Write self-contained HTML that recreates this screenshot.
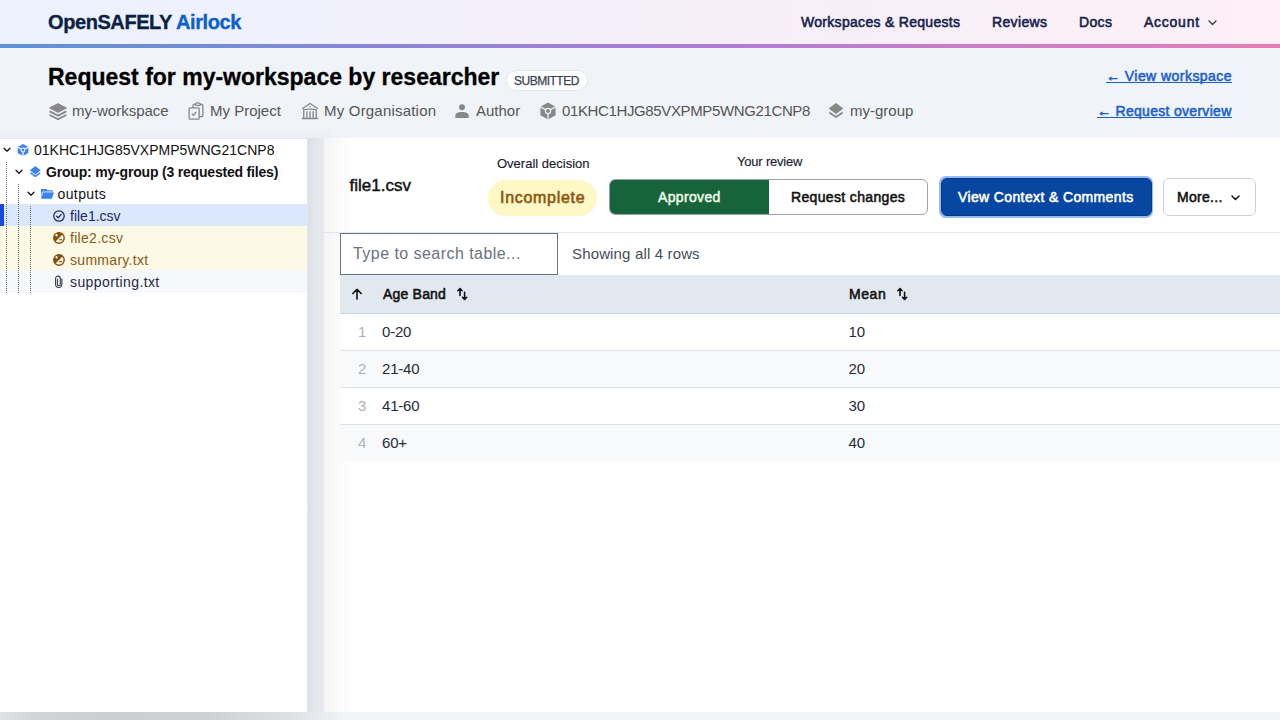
<!DOCTYPE html>
<html><head><meta charset="utf-8">
<style>
*{box-sizing:border-box;margin:0;padding:0}
html,body{width:1280px;height:720px;overflow:hidden}
body{font-family:"Liberation Sans",sans-serif;background:#f0f3f8;color:#111;position:relative}
.a{position:absolute;white-space:nowrap;line-height:1}
svg{position:absolute;display:block;overflow:visible}
#hdr{position:absolute;left:0;top:0;width:1280px;height:44px;background:linear-gradient(90deg,#ecf2fe 0%,#f5effa 50%,#fdf0f6 100%)}
#hbar{position:absolute;left:0;top:44px;width:1280px;height:4px;background:linear-gradient(90deg,#5b93d8 0%,#a97bdb 50%,#e97db8 100%)}
.logo{font-size:20px;font-weight:bold;color:#0a1f44;letter-spacing:-0.42px;-webkit-text-stroke:0.35px #0a1f44}
.logo span{-webkit-text-stroke:0.35px #0b5fcc}
.logo span{color:#0b5fcc}
.nav{font-size:14px;color:#12224a;-webkit-text-stroke:0.55px #12224a;letter-spacing:0.35px}
#nav1{letter-spacing:0.3px}
#nav4{letter-spacing:0.75px}
.title{font-size:23px;font-weight:bold;color:#000;-webkit-text-stroke:0.3px #000}
.pill{left:506px;top:70px;width:82px;height:21px;border-radius:11px;background:#fff;border:1px solid #e3e7ee}
.pilltxt{font-size:12px;color:#3a4152;letter-spacing:-0.5px;-webkit-text-stroke:0.25px #3a4152}
.meta{font-size:15px;color:#555}
#m5{letter-spacing:-0.37px}
#m3{letter-spacing:0.2px}
.rlink{font-size:14px;color:#1b5fcc;-webkit-text-stroke:0.55px #1b5fcc;letter-spacing:0.45px}
.ul{position:absolute;height:2px;background:#1b5fcc}
#tree{position:absolute;left:0;top:138px;width:308px;height:574px;background:#fff;border-top:1px solid #e3e6eb;border-right:1px solid #e3e6eb}
#main{position:absolute;left:324px;top:138px;width:956px;height:574px;background:linear-gradient(90deg,#f5f5f6 0px,#fafafa 14px,#fff 30px)}
.tt{font-size:14px;color:#111}
.row{position:absolute;left:0;width:307px;height:22px}
.dot{position:absolute;width:1px;background:repeating-linear-gradient(180deg,transparent 0 1px,#6a6a6a 1px 2px)}
</style></head><body>
<div id="hdr"></div><div id="hbar"></div>
<div id="logo" class="a logo" style="left:48px;top:12px">OpenSAFELY <span>Airlock</span></div>
<div id="nav1" class="a nav" style="left:801px;top:15px">Workspaces &amp; Requests</div>
<div id="nav2" class="a nav" style="left:992px;top:15px">Reviews</div>
<div id="nav3" class="a nav" style="left:1079px;top:15px">Docs</div>
<div id="nav4" class="a nav" style="left:1144px;top:15px">Account</div>
<svg style="left:1207.5px;top:20.2px" width="9" height="6" viewBox="0 0 9 6"><path d="M1 1l3.5 3.5L8 1" fill="none" stroke="#333a48" stroke-width="1.3" stroke-linecap="round" stroke-linejoin="round"/></svg>

<div id="title" class="a title" style="left:48px;top:65.5px">Request for my-workspace by researcher</div>
<div class="a pill"></div>
<div id="pilltxt" class="a pilltxt" style="left:514px;top:75px">SUBMITTED</div>

<!-- meta row -->
<svg style="left:49px;top:102.5px" width="18" height="17" viewBox="0 0 18 17"><path d="M9 0.8L17.2 5 9 9.2 0.8 5z" fill="#888" stroke="#888" stroke-width="1.2" stroke-linejoin="round"/><path d="M1.2 8.6L9 12.6l7.8-4M1.2 12.2L9 16.2l7.8-4" fill="none" stroke="#888" stroke-width="1.8" stroke-linecap="round" stroke-linejoin="round"/></svg>
<div id="m1" class="a meta" style="left:72px;top:103px">my-workspace</div>
<svg style="left:186px;top:101px" width="20" height="20" viewBox="0 0 24 24"><path fill="none" stroke="#888" stroke-width="1.6" stroke-linecap="round" stroke-linejoin="round" d="M11.35 3.836c-.065.21-.1.433-.1.664 0 .414.336.75.75.75h4.5a.75.75 0 00.75-.75 2.250 2.250 0 00-.1-.664m-5.8 0A2.251 2.251 0 0113.5 2.25H15c1.012 0 1.867.668 2.15 1.586m-5.8 0c-.376.023-.75.05-1.124.08C9.095 4.01 8.25 4.973 8.25 6.108V8.25m8.9-4.414c.376.023.75.05 1.124.08 1.131.094 1.976 1.057 1.976 2.192V16.5A2.25 2.25 0 0118 18.75h-2.25m-7.5-10.5H4.875c-.621 0-1.125.504-1.125 1.125v11.25c0 .621.504 1.125 1.125 1.125h9.75c.621 0 1.125-.504 1.125-1.125V18.75m-7.5-10.5h6.375c.621 0 1.125.504 1.125 1.125v9.375m-8.250-3l1.5 1.5 3-3.75"/></svg>
<div id="m2" class="a meta" style="left:210px;top:103px">My Project</div>
<svg style="left:300px;top:101px" width="20" height="20" viewBox="0 0 24 24"><path fill="none" stroke="#888" stroke-width="1.6" stroke-linecap="round" stroke-linejoin="round" d="M12 21v-8.25M15.75 21v-8.25M8.25 21v-8.25M3 9l9-6 9 6m-1.5 12V10.332A48.36 48.36 0 0012 9.75c-2.551 0-5.056.2-7.5.582V21M3 21h18M12 6.75h.008v.008H12V6.75z"/></svg>
<div id="m3" class="a meta" style="left:324px;top:103px">My Organisation</div>
<svg style="left:455px;top:104px" width="14" height="14" viewBox="0 0 14 14"><circle cx="7" cy="3.3" r="3" fill="#888"/><path d="M0.3 14V11.6C0.3 9.3 2.6 7.9 7 7.9S13.7 9.3 13.7 11.6V14Z" fill="#888"/></svg>
<div id="m4" class="a meta" style="left:476px;top:103px">Author</div>
<svg id="cube1" style="left:538px;top:101px" width="20" height="20" viewBox="0 0 20 20"><defs><mask id="cm1"><rect width="20" height="20" fill="#fff"/><path d="M10 10L2 5.6M10 10L18 5.6M10 10V19" stroke="#000" stroke-width="1.3"/><circle cx="10" cy="10" r="3.2" fill="#000"/><circle cx="10" cy="10" r="2" fill="#fff"/></mask></defs><path fill="#888" mask="url(#cm1)" d="M10 1.6l7.6 4.2v8.4L10 18.4l-7.6-4.2V5.8z"/></svg>
<div id="m5" class="a meta" style="left:562px;top:103px">01KHC1HJG85VXPMP5WNG21CNP8</div>
<svg style="left:829px;top:103px" width="14" height="15" viewBox="0 0 14 15"><path d="M7 0.7L13.3 5.5 7 10.3 0.7 5.5z" fill="#888" stroke="#888" stroke-width="1.2" stroke-linejoin="round"/><path d="M1 9.9L7 14.1l6-4.2" fill="none" stroke="#888" stroke-width="1.8" stroke-linecap="round" stroke-linejoin="round"/></svg>
<div id="m6" class="a meta" style="left:850px;top:103px">my-group</div>

<div id="rl1" class="a rlink" style="left:1106px;top:69px">← View workspace</div>
<div class="ul" style="left:1105.5px;top:81.6px;width:126.5px;height:1.5px"></div>
<div id="rl2" class="a rlink" style="left:1097px;top:104px;letter-spacing:0.3px">← Request overview</div>
<div class="ul" style="left:1096.8px;top:116.9px;width:135.2px;height:1.5px"></div>


<div style="position:absolute;left:308px;top:138px;width:16px;height:574px;background:linear-gradient(90deg,#dde0e5 0%,#e2e5ea 40%,#e6e9ee 100%)"></div>
<div style="position:absolute;left:0;top:712px;width:340px;height:8px;background:linear-gradient(90deg,#dfe2e7 0%,#d1d4d9 10%,#cbced3 30%,#cdd0d5 60%,#dde1e6 85%,#eef1f5 100%)"></div>
<div style="position:absolute;left:0;top:110px;width:330px;height:28px;background:linear-gradient(180deg,rgba(0,0,0,0) 60%,rgba(40,50,70,0.025) 100%)"></div>
<!-- TREE -->
<div id="tree"></div>

<div class="row" style="top:204px;height:22px;background:#dbe7fc"></div>
<div class="row" style="top:226px;height:44px;background:#fdf9e7"></div>
<div class="row" style="top:270px;height:23px;background:#f6f8fb"></div>
<div style="position:absolute;left:0;top:204px;width:4px;height:22px;background:#1d48d6"></div>
<div class="dot" style="left:6px;top:161px;height:132px"></div>
<div class="dot" style="left:18px;top:183px;height:110px"></div>
<div class="dot" style="left:30px;top:205px;height:88px"></div>
<svg style="left:3px;top:146.5px" width="8" height="6" viewBox="0 0 8 6"><path d="M1 1.2l3 3 3-3" fill="none" stroke="#111" stroke-width="1.25" stroke-linecap="round" stroke-linejoin="round"/></svg>
<svg style="left:15.2px;top:169.2px" width="8" height="6" viewBox="0 0 8 6"><path d="M1 1.2l3 3 3-3" fill="none" stroke="#111" stroke-width="1.25" stroke-linecap="round" stroke-linejoin="round"/></svg>
<svg style="left:27.2px;top:191px" width="8" height="6" viewBox="0 0 8 6"><path d="M1 1.2l3 3 3-3" fill="none" stroke="#111" stroke-width="1.25" stroke-linecap="round" stroke-linejoin="round"/></svg>
<svg style="left:16px;top:143px" width="14" height="14" viewBox="0 0 20 20"><defs><mask id="cm2"><rect width="20" height="20" fill="#fff"/><path d="M10 10L2 5.6M10 10L18 5.6M10 10V19" stroke="#000" stroke-width="1.7"/><circle cx="10" cy="10" r="3.4" fill="#000"/><circle cx="10" cy="10" r="2" fill="#fff"/></mask></defs><path fill="#3b82f6" mask="url(#cm2)" d="M10 1.6l7.6 4.2v8.4L10 18.4l-7.6-4.2V5.8z"/></svg>
<div id="t0" class="a tt" style="left:34px;top:143px">01KHC1HJG85VXPMP5WNG21CNP8</div>
<svg style="left:29.8px;top:166px" width="11" height="11" viewBox="0 0 11 11"><path d="M5.3 0.6L10.2 4.3 5.3 8 0.4 4.3z" fill="#3b82f6" stroke="#3b82f6" stroke-width="0.9" stroke-linejoin="round"/><path d="M0.9 7.2L5.3 10.3l4.4-3.1" fill="none" stroke="#3b82f6" stroke-width="1.5" stroke-linecap="round" stroke-linejoin="round"/></svg>
<div id="t1" class="a tt" style="left:46px;top:164.5px;font-weight:bold;letter-spacing:-0.19px">Group: my-group (3 requested files)</div>
<svg style="left:41px;top:189px" width="14" height="10" viewBox="0 0 14 10"><path d="M0 0H5.4L6.4 1.2H12V3.5H2L0.3 9.8H0Z" fill="#3b82f6"/><path d="M12.8 3H1.9Q1.3 3 1.15 4L0.7 7.6" fill="none" stroke="#fff" stroke-width="0.9"/><path d="M2 3.5H13L10.8 9.8H0.3Z" fill="#3b82f6"/></svg>
<div id="t2" class="a tt" style="left:57.5px;top:187px;letter-spacing:0.4px">outputs</div>
<svg style="left:53px;top:210px" width="12" height="12" viewBox="0 0 12 12"><circle cx="6" cy="6" r="5.2" fill="none" stroke="#1e2a6b" stroke-width="1.3"/><path d="M3.7 6.2l1.6 1.5 2.9-3.3" fill="none" stroke="#1e2a6b" stroke-width="1.3" stroke-linecap="round" stroke-linejoin="round"/></svg>
<div id="t3" class="a tt" style="left:70px;top:209px;color:#1e2a5e">file1.csv</div>
<svg style="left:53px;top:232px" width="12" height="12" viewBox="0 0 12 12"><defs><clipPath id="ul1"><path d="M0 0H12L0 12z"/></clipPath></defs><circle cx="6" cy="6" r="5.2" fill="none" stroke="#8a4f0c" stroke-width="1.4"/><circle cx="6" cy="6" r="5.5" fill="#8a4f0c" clip-path="url(#ul1)"/><path d="M3.5 2v2.6M2.2 3.3h2.6" stroke="#fdf9e7" stroke-width="1.1"/><path d="M6.2 7.7h2.9" stroke="#8a4f0c" stroke-width="1.2"/></svg>
<div id="t4" class="a tt" style="left:70px;top:230.8px;color:#8b5a14;letter-spacing:0.3px">file2.csv</div>
<svg style="left:53px;top:254px" width="12" height="12" viewBox="0 0 12 12"><defs><clipPath id="ul2"><path d="M0 0H12L0 12z"/></clipPath></defs><circle cx="6" cy="6" r="5.2" fill="none" stroke="#8a4f0c" stroke-width="1.4"/><circle cx="6" cy="6" r="5.5" fill="#8a4f0c" clip-path="url(#ul2)"/><path d="M3.5 2v2.6M2.2 3.3h2.6" stroke="#fdf9e7" stroke-width="1.1"/><path d="M6.2 7.7h2.9" stroke="#8a4f0c" stroke-width="1.2"/></svg>
<div id="t5" class="a tt" style="left:70px;top:252.6px;color:#8b5a14;letter-spacing:0.3px">summary.txt</div>
<svg style="left:55.2px;top:276.3px" width="7.6" height="11.4" viewBox="0 0 8 12"><path d="M7.2 3V8.8A3.3 3.3 0 0 1 0.6 8.8V2.6A2.5 2.5 0 0 1 5.6 2.6V8.6A1.5 1.5 0 0 1 2.6 8.6V3.5" fill="none" stroke="#3d4350" stroke-width="1.2" stroke-linecap="round"/></svg>
<div id="t6" class="a tt" style="left:70px;top:274.6px;color:#1f2a44;letter-spacing:0.4px">supporting.txt</div>


<!-- MAIN -->
<div id="main"></div>

<div style="position:absolute;left:324px;top:232px;width:956px;height:1px;background:#e3e7ed"></div>
<div id="fname" class="a" style="left:349.5px;top:176.6px;font-size:17px;color:#111;-webkit-text-stroke:0.45px #111">file1.csv</div>
<div id="od" class="a" style="left:497px;top:157px;font-size:13px;color:#1a1a2e;-webkit-text-stroke:0.15px #1a1a2e">Overall decision</div>
<div style="position:absolute;left:488px;top:180px;width:109px;height:36px;border-radius:18px;background:#fef7c6"></div>
<div id="inc" class="a" style="left:500px;top:189.5px;font-size:16px;color:#8d5208;-webkit-text-stroke:0.55px #8d5208;letter-spacing:0.7px">Incomplete</div>
<div id="yr" class="a" style="left:737px;top:155px;font-size:13px;color:#1a1a2e;letter-spacing:-0.2px;-webkit-text-stroke:0.15px #1a1a2e">Your review</div>
<div style="position:absolute;left:609px;top:179px;width:319px;height:36px;border-radius:6px;border:1px solid #9aa2ae;background:#fff;overflow:hidden"><div style="position:absolute;left:0;top:0;width:159px;height:34px;background:#17643a"></div></div>
<div id="appr" class="a" style="left:658px;top:190px;font-size:14px;color:#e9f7e6;-webkit-text-stroke:0.55px #e9f7e6;letter-spacing:0.35px">Approved</div>
<div id="rc" class="a" style="left:791px;top:190px;font-size:14px;color:#111;-webkit-text-stroke:0.55px #111;letter-spacing:0.35px">Request changes</div>
<div style="position:absolute;left:939px;top:176px;width:214px;height:41.5px;border-radius:7px;background:#93bcf5"></div>
<div style="position:absolute;left:940.5px;top:177.5px;width:211px;height:38.5px;border-radius:6px;background:#0747a1;border:1px solid #053a8a"></div>
<div id="vcc" class="a" style="left:958px;top:190px;font-size:14px;color:#fff;-webkit-text-stroke:0.55px #fff;letter-spacing:0.37px">View Context &amp; Comments</div>
<div style="position:absolute;left:1163px;top:178px;width:93px;height:37.5px;border-radius:6px;border:1px solid #cbd0d8;background:#fff"></div>
<div id="more" class="a" style="left:1177px;top:190px;font-size:14px;color:#111;-webkit-text-stroke:0.55px #111;letter-spacing:0.3px">More...</div>
<svg style="left:1231px;top:195px" width="9" height="6" viewBox="0 0 9 6"><path d="M1 1l3.5 3.5L8 1" fill="none" stroke="#111" stroke-width="1.5" stroke-linecap="round" stroke-linejoin="round"/></svg>
<div style="position:absolute;left:340px;top:233px;width:217.5px;height:41.5px;border:1.5px solid #6b7280;background:#fff"></div>
<div id="ph" class="a" style="left:353px;top:246px;font-size:16px;color:#6b7280;letter-spacing:0.45px">Type to search table...</div>
<div id="show" class="a" style="left:572px;top:245.8px;font-size:15px;color:#454c57;letter-spacing:0.15px">Showing all 4 rows</div>
<div style="position:absolute;left:340px;top:275px;width:940px;height:39px;background:#e2e8f0;border-bottom:1px solid #cbd5e1"></div>
<svg style="left:351px;top:288px" width="12" height="12" viewBox="0 0 12 12"><path d="M6 11V1.5M1.8 5.5L6 1.3l4.2 4.2" fill="none" stroke="#111" stroke-width="1.6" stroke-linecap="round" stroke-linejoin="round"/></svg>
<div id="th1" class="a" style="left:383px;top:286.6px;font-size:14px;color:#111;-webkit-text-stroke:0.55px #111;letter-spacing:0.2px">Age Band</div>
<svg style="left:457px;top:287px" width="12" height="14" viewBox="0 0 12 14"><path d="M3 8.5V1.6M0.9 3.7L3 1.6l2.1 2.1M7.6 5.2v7.2M5.5 10.3l2.1 2.1 2.1-2.1" fill="none" stroke="#111" stroke-width="1.6" stroke-linecap="round" stroke-linejoin="round"/></svg>
<div id="th2" class="a" style="left:849px;top:286.6px;font-size:14px;color:#111;-webkit-text-stroke:0.55px #111;letter-spacing:0.55px">Mean</div>
<svg style="left:897px;top:287px" width="12" height="14" viewBox="0 0 12 14"><path d="M3 8.5V1.6M0.9 3.7L3 1.6l2.1 2.1M7.6 5.2v7.2M5.5 10.3l2.1 2.1 2.1-2.1" fill="none" stroke="#111" stroke-width="1.6" stroke-linecap="round" stroke-linejoin="round"/></svg>
<div style="position:absolute;left:340px;top:314px;width:940px;height:37px;background:#fff;border-bottom:1px solid #dde3ea"></div>
<div style="position:absolute;left:340px;top:351px;width:940px;height:37px;background:#f8f9fb;border-bottom:1px solid #dde3ea"></div>
<div style="position:absolute;left:340px;top:388px;width:940px;height:37px;background:#fff;border-bottom:1px solid #dde3ea"></div>
<div style="position:absolute;left:340px;top:425px;width:940px;height:36px;background:#f8f9fb"></div>
<div id="rn0" class="a" style="left:358px;top:324px;font-size:15px;color:#aeb2b8">1</div>
<div id="ra0" class="a" style="left:382px;top:324px;font-size:15px;color:#262b38;letter-spacing:-0.2px">0-20</div>
<div id="rb0" class="a" style="left:848.5px;top:324px;font-size:15px;color:#262b38;letter-spacing:-0.2px">10</div>
<div id="rn1" class="a" style="left:358px;top:361px;font-size:15px;color:#aeb2b8">2</div>
<div id="ra1" class="a" style="left:382px;top:361px;font-size:15px;color:#262b38;letter-spacing:-0.2px">21-40</div>
<div id="rb1" class="a" style="left:848.5px;top:361px;font-size:15px;color:#262b38;letter-spacing:-0.2px">20</div>
<div id="rn2" class="a" style="left:358px;top:398px;font-size:15px;color:#aeb2b8">3</div>
<div id="ra2" class="a" style="left:382px;top:398px;font-size:15px;color:#262b38;letter-spacing:-0.2px">41-60</div>
<div id="rb2" class="a" style="left:848.5px;top:398px;font-size:15px;color:#262b38;letter-spacing:-0.2px">30</div>
<div id="rn3" class="a" style="left:358px;top:435px;font-size:15px;color:#aeb2b8">4</div>
<div id="ra3" class="a" style="left:382px;top:435px;font-size:15px;color:#262b38;letter-spacing:-0.2px">60+</div>
<div id="rb3" class="a" style="left:848.5px;top:435px;font-size:15px;color:#262b38;letter-spacing:-0.2px">40</div>

</body></html>
